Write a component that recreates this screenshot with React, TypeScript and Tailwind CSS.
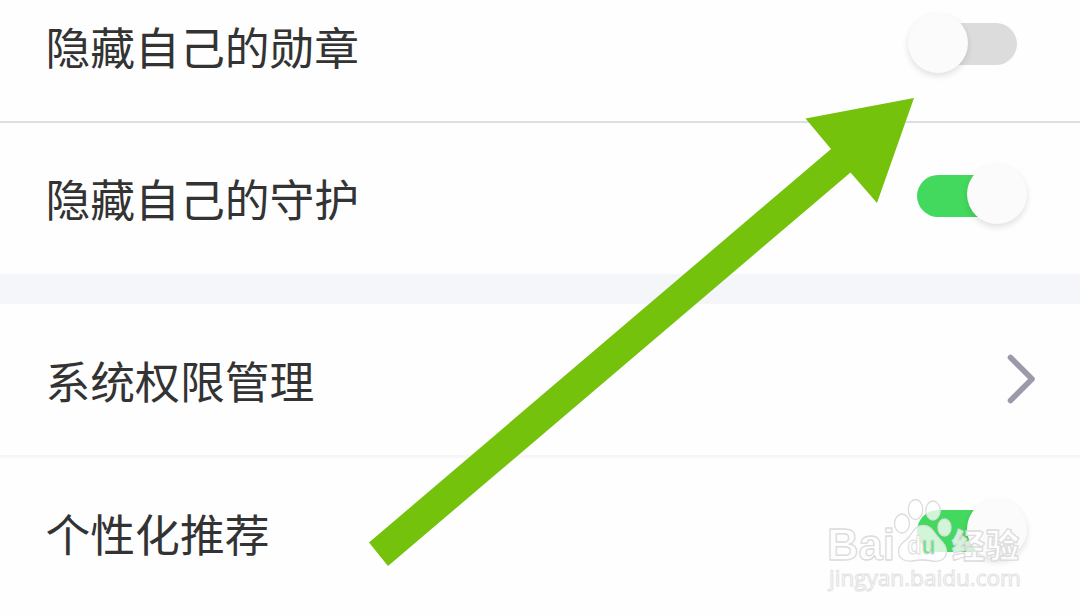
import React, { useState } from 'react';
import clsx from 'clsx';

interface SwitchProps {
  on: boolean;
  onToggle: () => void;
}

const Switch: React.FC<SwitchProps> = ({ on, onToggle }) => (
  <button
    role="switch"
    aria-checked={on}
    onClick={onToggle}
    className={clsx(
      'relative mr-[63px] h-[42px] w-[100px] shrink-0 rounded-full',
      on ? 'bg-[#43d95f]' : 'bg-[#dcdcdc]'
    )}
  >
    <span
      className={clsx(
        'absolute size-[60px] rounded-full bg-[#fbfbfb] shadow-[0_3px_6px_rgba(0,0,0,0.12)]',
        on ? 'left-[50px] -top-[11px]' : '-left-[9px] -top-[10px]'
      )}
    />
  </button>
);

interface RowProps {
  label: string;
  className?: string;
  children: React.ReactNode;
}

const Row: React.FC<RowProps> = ({ label, className, children }) => (
  <div className={clsx('flex items-center justify-between pl-[45.5px]', className)}>
    <span className="whitespace-nowrap pt-2.5 text-[44.8px] leading-[60px]">{label}</span>
    {children}
  </div>
);

const Pointer = () => (
  <svg className="pointer-events-none absolute inset-0" width="1080" height="615" viewBox="0 0 1080 615">
    <path d="M914 98 L877 203 L850.5 172.5 L388 566 L369 542.5 L831 149 L805.5 118.5 Z" fill="#75c20c" />
  </svg>
);

const Watermark = () => (
  <svg
    className="pointer-events-none absolute left-[820px] top-[495px]"
    width="210"
    height="105"
    viewBox="820 495 210 105"
    fill="#ffffff"
    fillOpacity="0.75"
    stroke="#dcdcdc"
    strokeWidth="1.3"
    strokeLinejoin="round"
    fontFamily="'Liberation Sans', sans-serif"
  >
    <text x="827" y="559.5" fontSize="44" fontWeight="700" textLength="68" lengthAdjust="spacingAndGlyphs">Bai</text>
    <ellipse cx="902" cy="523.5" rx="7.5" ry="9.5" />
    <ellipse cx="915.5" cy="509.5" rx="7.2" ry="10" />
    <ellipse cx="933" cy="510.5" rx="7.2" ry="9.5" />
    <ellipse cx="944.5" cy="527.5" rx="6.5" ry="8.5" />
    <path d="M923 525.5 C915 525.5 913 532 909 537 C904 542 898 545 898.5 552 C899 559 905 562 912 561 C920 559.5 925 559.5 932 561 C940 562.5 946 559 946.5 552 C947 545 941 541 937 536 C933 531 931 525.5 923 525.5 Z" />
    <text x="907.5" y="554" fontSize="25" fontWeight="700" textLength="28" lengthAdjust="spacingAndGlyphs" strokeWidth="1">
      d<tspan fill="#43d95f">u</tspan>
    </text>
    <text x="952" y="558" fontSize="33" fontWeight="900" fontFamily="'Noto Sans CJK SC', sans-serif" textLength="67">经验</text>
    <text x="829" y="586" fontSize="22" fontFamily="'Open Sans', sans-serif" textLength="192" lengthAdjust="spacingAndGlyphs" stroke="#e2e2e2" strokeWidth="1">
      jingyan.baidu.com
    </text>
  </svg>
);

export default function App() {
  const [hideMedal, setHideMedal] = useState(false);
  const [hideGuard, setHideGuard] = useState(true);
  const [recommend, setRecommend] = useState(true);

  return (
    <div className="relative h-[615px] w-[1080px] overflow-hidden bg-[#fefefe] font-['Liberation_Sans','Noto_Sans_CJK_SC',sans-serif] text-[#333333]">
      <Row label="隐藏自己的勋章" className="h-[121px] pb-[33px]">
        <Switch on={hideMedal} onToggle={() => setHideMedal(!hideMedal)} />
      </Row>
      <div className="h-0.5 bg-[#dfdfdf]" />
      <Row label="隐藏自己的守护" className="h-[151px] pb-[5px]">
        <Switch on={hideGuard} onToggle={() => setHideGuard(!hideGuard)} />
      </Row>
      <div className="h-[30px] bg-[#f5f6f9]" />
      <Row label="系统权限管理" className="h-[151px] pb-[3px]">
        <svg className="mr-[44px] mt-0.5" width="30" height="52" viewBox="0 0 30 52" fill="none" stroke="#9c9aa8" strokeWidth="5.6" strokeLinecap="round" strokeLinejoin="round">
          <path d="M4.5 4.5 L26 26 L4.5 47.5" />
        </svg>
      </Row>
      <div className="h-[3px] bg-[#f6f6f7]" />
      <Row label="个性化推荐" className="h-[151px] pb-[5px]">
        <Switch on={recommend} onToggle={() => setRecommend(!recommend)} />
      </Row>
      <Pointer />
      <Watermark />
    </div>
  );
}
